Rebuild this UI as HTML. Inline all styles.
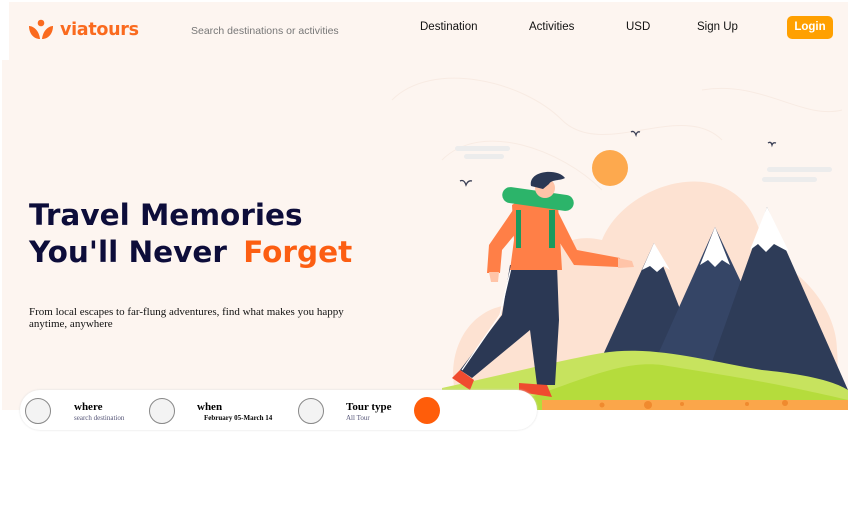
<!DOCTYPE html>
<html><head><meta charset="utf-8"><style>
*{margin:0;padding:0;box-sizing:border-box}
body{width:848px;height:525px;background:#fff;position:relative;overflow:hidden;font-family:"Liberation Sans",sans-serif}
.hdr{position:absolute;left:9px;top:2px;width:839px;height:58px;background:#fdf5f0}
.hero{position:absolute;left:2px;top:60px;width:846px;height:350px;background:#fdf5f0}
.logo{position:absolute;left:28px;top:19px;display:flex;align-items:center}
.logo span{color:#fa6a1e;font-weight:bold;font-size:17.5px;margin-left:6px;font-family:"DejaVu Sans",sans-serif;letter-spacing:-0.3px}
.search{position:absolute;left:191px;top:25px;font-size:10.5px;color:#777}
.nav{position:absolute;top:21px;font-size:11.5px;color:#111}
.login{position:absolute;left:787px;top:16px;width:46px;height:23px;background:#ffa000;color:#fff;border-radius:5px;font-size:11.5px;font-weight:bold;text-align:center;line-height:23px}
h1{position:absolute;left:29px;top:197px;font-family:"DejaVu Sans",sans-serif;font-weight:bold;font-size:29.5px;line-height:37px;color:#0d0d3a;letter-spacing:0}
h1 b{color:#fc5e12;margin-left:6px}
.sub{position:absolute;left:29px;top:306px;font-family:"Liberation Serif",serif;font-size:11px;line-height:12px;color:#111;width:330px}
.bar{position:absolute;left:20px;top:390px;width:517px;height:40px;background:#fff;border-radius:20px;box-shadow:0 0 2px #ddd}
.c{position:absolute;top:8px;width:26px;height:26px;border-radius:50%;background:#f3f3f3;border:1px solid #888}
.t{position:absolute;top:11px;font-family:"Liberation Serif",serif;font-weight:bold;font-size:11px;color:#000}
.s{position:absolute;top:24px;font-family:"Liberation Serif",serif;font-size:7px;color:#557}
</style></head><body>
<div class="hdr"></div>
<div class="hero">
<svg width="846" height="350" style="position:absolute;left:0;top:0">
<g fill="none" stroke="#f8ebe3" stroke-width="1">
<path d="M390 40 C430 0 520 20 560 60 S680 40 720 80"/><path d="M440 100 C480 60 560 90 600 130"/><path d="M700 30 C760 20 800 60 840 50"/>
</g>
<path d="M455 340 C440 290 470 240 520 245 C530 200 560 170 600 180 C620 130 700 100 740 140 C760 160 760 190 770 200 C800 210 835 250 835 290 C838 320 830 350 830 350Z" fill="#fde2d2"/>
<g fill="#ececec"><rect x="453" y="86" width="55" height="5" rx="2.5"/><rect x="462" y="94" width="40" height="5" rx="2.5"/><rect x="765" y="107" width="65" height="5" rx="2.5"/><rect x="760" y="117" width="55" height="5" rx="2.5"/></g>
<circle cx="608" cy="108" r="18" fill="#fda94e"/>
<g fill="none" stroke="#3a3f55" stroke-width="1.3"><path d="M458 121 q4 -2 6 4 q2 -5 6 -4"/><path d="M629 72 q3 -2 5 3 q1 -4 4 -3"/><path d="M766 83 q3 -2 4 2 q1 -3 4 -2"/></g>
<polygon points="585,330 652,183 710,330" fill="#2f3d5a"/>
<polygon points="640,330 713,167 790,330" fill="#354566"/>
<polygon points="700,330 765,147 846,330" fill="#2e3c58"/>
<polygon points="652,183 640,210 648,206 655,212 662,206 668,210" fill="#fff"/>
<polygon points="713,167 698,205 706,200 713,207 720,200 728,205" fill="#fff"/>
<polygon points="765,147 748,190 756,184 764,192 772,184 787,192" fill="#fff"/>
<path d="M440 328 C500 315 560 300 600 293 C650 285 700 300 760 310 C800 314 830 320 846 330 L846 350 L440 350Z" fill="#c7e35e"/>
<path d="M520 340 C580 320 620 300 660 305 C720 315 760 320 846 340 L846 350 L520 350Z" fill="#b5dc3c"/>
<rect x="540" y="340" width="306" height="10" fill="#fba64a"/>
<g fill="#f08a2e"><circle cx="600" cy="345" r="2.5"/><circle cx="646" cy="345" r="4"/><circle cx="680" cy="344" r="2"/><circle cx="745" cy="344" r="2"/><circle cx="783" cy="343" r="3"/></g>
<path d="M508 205 L555 205 L557 260 L553 325 L535 325 L528 270 L470 318 L458 310 L500 255Z" fill="#2b3854"/>
<path d="M509 208 L498 255 L460 310" fill="none" stroke="#fff" stroke-width="1.2"/>
<path d="M458 310 L450 318 L468 330 L472 320Z" fill="#ef4b2f"/>
<path d="M517 323 L517 332 L550 337 L545 325Z" fill="#ef4b2f"/>
<path d="M511 150 L487 185 L485 213 L498 213 L500 190 L515 172Z" fill="#ff7f47"/>
<path d="M555 150 L575 190 L618 198 L616 207 L572 205 L556 180Z" fill="#ff7f47"/>
<path d="M510 145 C520 138 545 138 556 145 L560 210 L508 210 L512 180Z" fill="#ff7f47"/>
<rect x="500" y="131" width="72" height="16" rx="8" fill="#2cb46a" transform="rotate(8 536 139)"/>
<rect x="547" y="150" width="6" height="38" fill="#1a9a5e"/><rect x="514" y="150" width="5" height="38" fill="#1a9a5e"/>
<circle cx="543" cy="128" r="10" fill="#ffc4a8"/>
<path d="M529 126 C526 110 556 108 563 118 C558 121 550 119 547 124 L541 129Z" fill="#2b3854"/>
<path d="M616 198 L630 201 L632 207 L616 208Z" fill="#ffc4a8"/>
<path d="M487 212 L497 212 L496 222 L489 222Z" fill="#ffc4a8"/>
</svg>
</div>
<div class="logo"><svg width="26" height="22" viewBox="0 0 26 22"><circle cx="13" cy="4" r="3.3" fill="#fa6a1e"/><path d="M1 7 C5 7 11 11 12 20 C6 20 1 15 1 7Z" fill="#fa6a1e"/><path d="M25 7 C21 7 15 11 14 20 C20 20 25 15 25 7Z" fill="#fa6a1e"/></svg><span>viatours</span></div>
<div class="search">Search destinations or activities</div>
<div class="nav" style="left:420px">Destination</div>
<div class="nav" style="left:529px">Activities</div>
<div class="nav" style="left:626px">USD</div>
<div class="nav" style="left:697px">Sign Up</div>
<div class="login">Login</div>
<h1>Travel Memories<br>You'll Never <b>Forget</b></h1>
<div class="sub">From local escapes to far-flung adventures, find what makes you happy anytime, anywhere</div>
<div class="bar">
<div class="c" style="left:5px"></div><div class="t" style="left:54px">where</div><div class="s" style="left:54px">search destination</div>
<div class="c" style="left:129px"></div><div class="t" style="left:177px">when</div><div class="s" style="left:184px;color:#000;font-weight:bold">February 05-March 14</div>
<div class="c" style="left:278px"></div><div class="t" style="left:326px">Tour type</div><div class="s" style="left:326px">All Tour</div>
<div style="position:absolute;left:394px;top:7px;width:26px;height:27px;border-radius:50%;background:#ff5d0a"></div>
</div>
</body></html>
